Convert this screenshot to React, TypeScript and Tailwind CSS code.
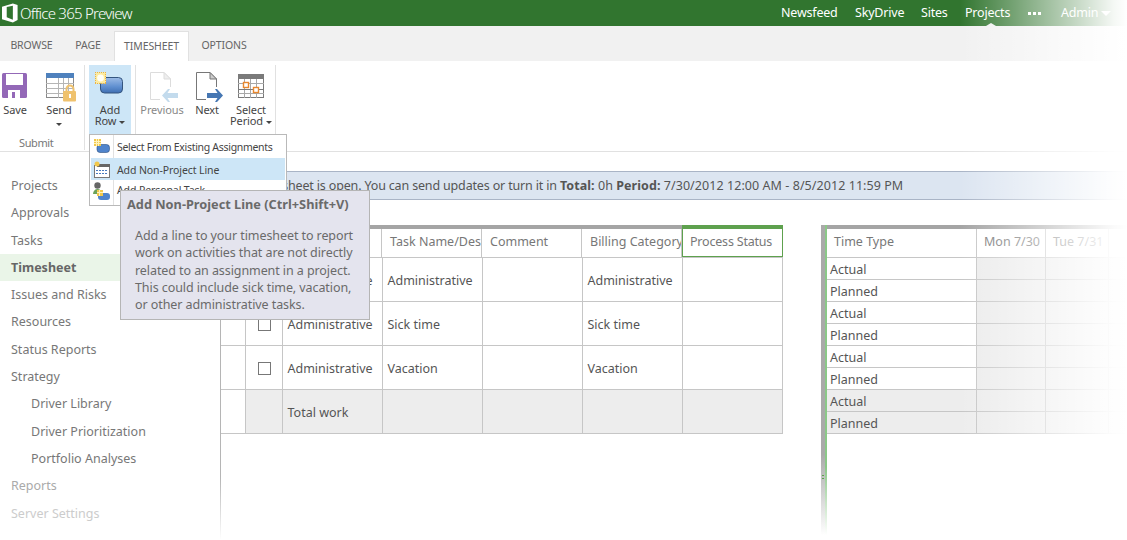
const navItems = [
  { label: "Projects", cls: "pl-[11px] text-[#777]" },
  { label: "Approvals", cls: "pl-[11px] text-[#777]" },
  { label: "Tasks", cls: "pl-[11px] text-[#777]" },
  { label: "Timesheet", cls: "pl-[11px] text-[#666] font-bold bg-[#eaf5e8]" },
  { label: "Issues and Risks", cls: "pl-[11px] text-[#777]" },
  { label: "Resources", cls: "pl-[11px] text-[#777]" },
  { label: "Status Reports", cls: "pl-[11px] text-[#777]" },
  { label: "Strategy", cls: "pl-[11px] text-[#777]" },
  { label: "Driver Library", cls: "pl-[31px] text-[#777]" },
  { label: "Driver Prioritization", cls: "pl-[31px] text-[#777]" },
  { label: "Portfolio Analyses", cls: "pl-[31px] text-[#777]" },
  { label: "Reports", cls: "pl-[11px] text-[#aaa]" },
  { label: "Server Settings", cls: "pl-[11px] text-[#ccc]" },
];

const rows = [
  { kind: "Administrative", task: "Administrative", billing: "Administrative" },
  { kind: "Administrative", task: "Sick time", billing: "Sick time" },
  { kind: "Administrative", task: "Vacation", billing: "Vacation" },
];

const timeRows = ["Actual", "Planned", "Actual", "Planned", "Actual", "Planned", "Actual", "Planned"];

function OfficeLogo() {
  return (
    <svg width="17" height="20" viewBox="0 0 18 20" className="ml-[2px] shrink-0">
      <path fillRule="evenodd" fill="#fff" d="M0 3.5 11.5 0 16.5 1.5V17.5L11.5 20 0 16.5ZM11.5 2.2 5 3.6V14.6L11.5 17.2Z" />
    </svg>
  );
}

function SaveIcon() {
  return (
    <svg width="26" height="26" viewBox="0 0 26 26">
      <rect x="0" y="0" width="25" height="25" rx="1.5" fill="#9368b7" />
      <rect x="4" y="1" width="17" height="11" fill="#fff" />
      <rect x="6" y="17" width="12" height="8" fill="#fff" />
      <rect x="10" y="19" width="3" height="6" fill="#9368b7" />
    </svg>
  );
}

function SendIcon() {
  return (
    <svg width="31" height="29" viewBox="0 0 31 29">
      <rect x="0.5" y="0.5" width="27" height="24" fill="#fff" stroke="#8a8a8a" />
      <rect x="0" y="0" width="28" height="5" fill="#4f81bd" />
      <path stroke="#b5b5b5" fill="none" d="M12.5 5v20M17.5 5v20M22.5 5v20M0 10.5h28M0 15.5h28M0 20.5h28" />
      <path fill="none" stroke="#efc26e" strokeWidth="2" d="M20.5 19v-3a3.5 3.5 0 0 1 7 0v3" />
      <rect x="17" y="18" width="13" height="10.5" rx="1" fill="#efc26e" />
      <rect x="23" y="21" width="2" height="4" fill="#fff" />
    </svg>
  );
}

function AddRowIcon() {
  return (
    <svg width="28" height="22" viewBox="0 0 28 22">
      <defs>
        <linearGradient id="blueBar" x1="0" y1="0" x2="0" y2="1">
          <stop offset="0" stopColor="#9dbce6" />
          <stop offset="0.6" stopColor="#5f8fd0" />
          <stop offset="1" stopColor="#3f6fb2" />
        </linearGradient>
      </defs>
      <rect x="5.5" y="5.5" width="22" height="15.5" rx="4" fill="url(#blueBar)" stroke="#34557f" />
      <rect x="0.5" y="0.5" width="10.5" height="11" fill="#fdeb9e" />
      <path stroke="#eeb23f" strokeDasharray="1 1" fill="none" d="M0 .5h11M0 11.5h11M.5 0v12M10.5 0v12" />
      <circle cx="5.5" cy="6" r="3.4" fill="#fffef6" />
    </svg>
  );
}

function PageArrow({ light }: { light?: boolean }) {
  const line = light ? "#dcdcdc" : "#777";
  return (
    <svg width="28" height="30" viewBox="0 0 28 30">
      <path fill="#fff" stroke={line} d="M0.5 0.5H14L20.5 7V27.5H0.5Z" />
      <path fill={light ? "#eee" : "#ccc"} stroke={line} d="M14 0.5V7H20.5Z" />
      <rect x="10" y="15" width="18" height="15" fill="#fff" />
      {light ? (
        <path fill="#c3dbed" d="M18 17H20L17.5 21H28V26H17.5L20 30H18L12 23.5Z" />
      ) : (
        <path fill="#4677b3" d="M19 17H21L27 23.5 21 30H19L21.5 26H11V21H21.5Z" />
      )}
    </svg>
  );
}

function PeriodIcon() {
  return (
    <svg width="27" height="25" viewBox="0 0 27 25">
      <rect x="0.5" y="0.5" width="25" height="23" fill="#fff" stroke="#7a7a7a" />
      <rect x="0" y="0" width="26" height="5" fill="#7a7a7a" />
      <path stroke="#a8a8a8" fill="none" d="M6.5 5v19M12.5 5v19M18.5 5v19M0 9.5h26M0 19.5h26" />
      <path stroke="#7a7a7a" d="M0 15.5h26" />
      <rect x="5.5" y="8.5" width="5" height="5" fill="#fff" stroke="#e8872d" strokeWidth="1.4" />
      <rect x="15.5" y="13.5" width="5" height="5" fill="#fff" stroke="#e8872d" strokeWidth="1.4" />
    </svg>
  );
}

function MenuBarIcon() {
  return (
    <svg width="16" height="14" viewBox="0 0 16 14">
      <rect x="3" y="5.5" width="12.5" height="8" rx="3" fill="#4f84cc" stroke="#2a4f80" strokeWidth="0.6" />
      <rect x="0" y="0" width="7" height="7" fill="#f2c84b" />
      <path stroke="#fff3bd" d="M0 2.5h7M0 4.5h7M2.5 0v7M4.5 0v7" />
    </svg>
  );
}

function MenuCalendarIcon() {
  return (
    <svg width="17" height="17" viewBox="0 0 17 17">
      <rect x="1.5" y="4.5" width="15" height="12" fill="#fff" stroke="#777" />
      <rect x="4" y="3" width="13" height="3" fill="#666" />
      <path stroke="#4a7cc0" strokeDasharray="2 1" fill="none" d="M3 9.5h12M3 12.5h12" />
      <circle cx="4" cy="3" r="2.5" fill="#f2c84b" />
    </svg>
  );
}

function MenuPersonIcon() {
  return (
    <svg width="17" height="18" viewBox="0 0 17 18">
      <circle cx="4.5" cy="3.5" r="3.2" fill="#666" />
      <path fill="#6ca35a" d="M0 12c0-3 2-5 4.5-5S9 9 9 12Z" />
      <rect x="5" y="11" width="12" height="7" rx="3" fill="#4f84cc" />
      <rect x="4" y="8" width="6" height="6" fill="#f2c84b" />
      <path stroke="#fff3bd" d="M4 10.5h6M6.5 8v6" />
    </svg>
  );
}

function Caret({ color = "#444" }: { color?: string }) {
  return (
    <svg width="6" height="3" viewBox="0 0 6 3" className="inline-block align-middle">
      <path d="M0 0h6L3 3Z" fill={color} />
    </svg>
  );
}

function RibbonButton({
  icon,
  lines,
  width,
  caret,
  dim,
  active,
  iconCls,
}: {
  icon: React.ReactNode;
  lines: string[];
  width: string;
  caret?: "inline" | "below";
  dim?: boolean;
  active?: boolean;
  iconCls: string;
}) {
  return (
    <div className={`flex flex-col items-center ${width} ${active ? "bg-[#cde6f7] h-[74px]" : ""}`}>
      <div className={`flex items-end justify-center ${iconCls}`}>{icon}</div>
      <div className={`text-[11px] leading-[11px] text-center tracking-[-0.1px] ${dim ? "text-[#888]" : "text-[#444]"}`}>
        {lines.map((l, i) => (
          <div key={l}>
            {l}
            {caret === "inline" && i === lines.length - 1 ? (
              <span className="ml-[3px]">
                <Caret />
              </span>
            ) : null}
          </div>
        ))}
        {caret === "below" ? (
          <div className="mt-[2px]">
            <Caret />
          </div>
        ) : null}
      </div>
    </div>
  );
}

export default function App() {
  return (
    <div className="relative w-[1127px] h-[540px] overflow-hidden bg-white font-['Noto_Sans',sans-serif]">
      {/* top bar */}
      <div className="relative h-[26px] bg-[#31752f] flex items-center text-white">
        <OfficeLogo />
        <span className="ml-[1px] text-[15px] font-light tracking-[-0.75px]">Office 365 Preview</span>
        <div className="ml-auto flex items-center text-[12.5px] tracking-[-0.2px] mr-[16px]">
          <span className="w-[74px]">Newsfeed</span>
          <span className="w-[66px]">SkyDrive</span>
          <span className="w-[44px]">Sites</span>
          <span className="w-[63px]">Projects</span>
          <span className="w-[33px] flex gap-[2px]">
            <i className="block w-[3px] h-[3px] bg-white" />
            <i className="block w-[3px] h-[3px] bg-white" />
            <i className="block w-[3px] h-[3px] bg-white" />
          </span>
          <span className="w-[40px]">Admin</span>
          <svg width="10" height="5" viewBox="0 0 10 5">
            <path d="M0 0h10L5 5Z" fill="#fff" />
          </svg>
        </div>
        <svg width="10" height="3" viewBox="0 0 10 3" className="absolute left-[986px] bottom-0">
          <path d="M0 3 5 0l5 3Z" fill="#f1f1f1" />
        </svg>
      </div>

      {/* tabs */}
      <div className="h-[35px] bg-[#f1f1f1] flex items-end text-[10.5px] text-[#666] tracking-[-0.1px]">
        <div className="h-[30px] w-[62px] flex items-center justify-center pl-[1px]">BROWSE</div>
        <div className="h-[30px] w-[52px] flex items-center justify-center">PAGE</div>
        <div className="h-[30px] w-[75px] bg-white border border-b-0 border-[#e1e1e1] flex items-center justify-center">
          TIMESHEET
        </div>
        <div className="h-[30px] w-[70px] flex items-center justify-center">OPTIONS</div>
      </div>

      {/* ribbon */}
      <div className="h-[91px] border-b border-[#e1e1e1] flex pt-[4px]">
        <div className="w-[85px] h-[85px] border-r border-[#e1e1e1] flex flex-col">
          <div className="flex h-[66px]">
            <RibbonButton icon={<SaveIcon />} lines={["Save"]} width="w-[30px]" iconCls="h-[34px] mb-[5px]" />
            <RibbonButton
              icon={<SendIcon />}
              lines={["Send"]}
              width="w-[44px] ml-[7px]"
              caret="below"
              iconCls="h-[37px] mb-[2px] pl-[4px]"
            />
          </div>
          <div className="mt-[7px] pl-[19px] text-[11px] leading-[14px] text-[#777] tracking-[-0.4px]">Submit</div>
        </div>
        <div className="w-[51px] h-[85px] pl-[4px] border-r border-[#e1e1e1]">
          <RibbonButton
            icon={<AddRowIcon />}
            lines={["Add", "Row"]}
            width="w-[42px]"
            caret="inline"
            active
            iconCls="h-[29px] mb-[10px] pr-[2px]"
          />
        </div>
        <div className="w-[140px] h-[85px] border-r border-[#e1e1e1] flex pl-[4px]">
          <RibbonButton icon={<PageArrow light />} lines={["Previous"]} width="w-[44px]" dim iconCls="h-[37px] mb-[2px] pl-[4px]" />
          <RibbonButton icon={<PageArrow />} lines={["Next"]} width="w-[44px] ml-[1px]" iconCls="h-[37px] mb-[2px] pl-[6px]" />
          <RibbonButton
            icon={<PeriodIcon />}
            lines={["Select", "Period"]}
            width="w-[44px]"
            caret="inline"
            iconCls="h-[34px] mb-[5px]"
          />
        </div>
      </div>

      {/* body */}
      <div className="flex h-[388px]">
        <div className="relative w-[221px] pt-[20px] shrink-0 text-[12.5px]">
          {navItems.map((n) => (
            <div key={n.label} className={`h-[27.3px] leading-[27px] ${n.cls}`}>
              {n.label}
            </div>
          ))}
          <div className="absolute right-0 top-[73px] bottom-0 w-[1px] bg-gradient-to-b from-[#b5b5b5] via-[#b5b5b5] via-[80%] to-white" />
        </div>

        <div className="flex-1 min-w-0 pt-[19px]">
          <div className="h-[29px] bg-[#dce5f1] border-y border-[#a9b4c6] pl-[11px] flex items-center text-[12.5px] text-[#555] whitespace-nowrap">
            <span className="pt-[2px]">
              <span className="tracking-[-0.16px]">The timesheet is open. You can send updates or turn it in </span>
              <span className="tracking-[0.06px]">
                <b>Total:</b> 0h <b>Period:</b> 7/30/2012 12:00 AM - 8/5/2012 11:59 PM
              </span>
            </span>
          </div>

          <div className="mt-[25px] flex">
            {/* left grid */}
            <div className="w-[562px] shrink-0 text-[12.5px] text-[#555]">
              <div className="flex h-[32px] text-[#777] whitespace-nowrap">
                <div className="w-[461px] border-t-[4px] border-[#a5a5a5] flex">
                  <div className="w-[24px] border-r border-[#c6c6c6]" />
                  <div className="w-[37px] border-r border-[#c6c6c6]" />
                  <div className="w-[100px] border-r border-[#c6c6c6]" />
                  <div className="w-[100px] border-r border-[#c6c6c6] flex items-center pl-[8px] pb-[1px] overflow-hidden">Task Name/Des</div>
                  <div className="w-[100px] border-r border-[#c6c6c6] flex items-center pl-[8px] pb-[1px]">Comment</div>
                  <div className="w-[100px] border-r border-[#c6c6c6] flex items-center pl-[8px] pb-[1px] overflow-hidden">Billing Category</div>
                </div>
                <div className="w-[101px] border border-t-[4px] border-[#5ea14e] flex items-center pl-[7px] pb-[1px] tracking-[-0.2px]">Process Status</div>
              </div>
              <table className="table-fixed border-collapse w-[561px]">
                <colgroup>
                  <col className="w-[24px]" />
                  <col className="w-[37px]" />
                  <col className="w-[100px]" />
                  <col className="w-[100px]" />
                  <col className="w-[100px]" />
                  <col className="w-[100px]" />
                  <col className="w-[100px]" />
                </colgroup>
                <tbody>
                  {rows.map((r, i) => (
                    <tr key={r.task} className="h-[44px]">
                      <td className="border border-[#c6c6c6] border-l-0" />
                      <td className={`border border-[#c6c6c6] pt-[2px] pl-[1px] ${i === 2 ? "border-l-[#5ea14e]" : ""}`}>
                        <div className="w-[13px] h-[13px] border border-[#777] mx-auto" />
                      </td>
                      <td className="border border-[#c6c6c6] pl-[5px] pt-[4px]">{r.kind}</td>
                      <td className="border border-[#c6c6c6] pl-[5px] pt-[4px]">{r.task}</td>
                      <td className="border border-[#c6c6c6]" />
                      <td className="border border-[#c6c6c6] pl-[5px] pt-[4px]">{r.billing}</td>
                      <td className="border border-[#c6c6c6]" />
                    </tr>
                  ))}
                  <tr className="h-[44px]">
                    <td className="border border-[#c6c6c6] border-l-0" />
                    <td className="border border-[#c6c6c6] bg-[#ededed]" />
                    <td className="border border-[#c6c6c6] bg-[#ededed] pl-[5px] pt-[4px]">Total work</td>
                    <td className="border border-[#c6c6c6] bg-[#ededed]" />
                    <td className="border border-[#c6c6c6] bg-[#ededed]" />
                    <td className="border border-[#c6c6c6] bg-[#ededed]" />
                    <td className="border border-[#c6c6c6] bg-[#ededed]" />
                  </tr>
                </tbody>
              </table>
            </div>

            {/* splitter */}
            <div className="relative ml-[38px] w-[6px] shrink-0 h-[310px] flex">
              <div className="w-[4px] h-full bg-gradient-to-b from-[#aaa] via-[#aaa] via-[74%] to-white" />
              <div className="w-[2px] h-full bg-gradient-to-b from-[#8bc888] via-[#8bc888] via-[78%] to-white" />
              <div className="absolute left-[1px] top-[250px] w-[2px] h-[4px] border-y border-[#5ea14e]" />
            </div>

            {/* right grid */}
            <div className="flex-1 min-w-0 text-[12.5px] text-[#555]">
              <div className="flex h-[33px] border-t-[4px] border-[#a5a5a5] border-b border-b-[#c6c6c6] text-[#777] whitespace-nowrap">
                <div className="w-[150px] border-r border-[#c6c6c6] pl-[7px] pb-[2px] flex items-center">Time Type</div>
                <div className="w-[69px] border-r border-[#c6c6c6] pl-[7px] pb-[2px] flex items-center">Mon 7/30</div>
                <div className="w-[63px] border-r border-[#c6c6c6] pl-[7px] pb-[2px] flex items-center">Tue 7/31</div>
              </div>
              {timeRows.map((t, i) => (
                <div key={`${t}${i}`} className={`flex h-[22px] border-b border-[#c6c6c6] ${i > 5 ? "bg-[#ededed]" : ""}`}>
                  <div className="w-[150px] border-r border-[#c6c6c6] pl-[3px] leading-[23px]">{t}</div>
                  <div className="w-[69px] border-r border-[#c6c6c6] bg-[#ececec]" />
                  <div className="w-[63px] border-r border-[#c6c6c6] bg-[#ececec]" />
                  <div className="flex-1 bg-[#ececec]" />
                </div>
              ))}
            </div>
          </div>
        </div>
      </div>

      {/* fade over the right edge */}
      <div className="absolute inset-y-0 left-[960px] right-0 pointer-events-none bg-gradient-to-r from-white/0 via-white/95 via-[92%] to-white" />

      {/* dropdown menu */}
      <div className="absolute left-[89px] top-[134px] w-[198px] h-[72px] bg-white border border-[#b9b9b9] p-[1px] text-[10.5px] text-[#444] whitespace-nowrap">
        <div className="absolute left-[23px] top-0 bottom-0 w-[1px] bg-[#e1e1e1]" />
        <div className="relative h-[22px] flex items-center">
          <span className="w-[26px] pl-[3px] pb-[3px]"><MenuBarIcon /></span>
          <span className="tracking-[-0.3px] pt-[2px]">Select From Existing Assignments</span>
        </div>
        <div className="relative h-[22px] flex items-center bg-[#cde6f7]">
          <span className="w-[26px] pl-[2px]"><MenuCalendarIcon /></span>
          <span className="tracking-[-0.1px] pt-[4px]">Add Non-Project Line</span>
        </div>
        <div className="relative h-[22px] flex items-center">
          <span className="w-[26px] pl-[2px]"><MenuPersonIcon /></span>
          <span className="tracking-[-0.1px]">Add Personal Task</span>
        </div>
      </div>

      {/* tooltip */}
      <div className="absolute left-[120px] top-[190px] w-[250px] h-[130px] bg-[#e4e4ee] border border-[#b5b5b5] text-[#6a6a6a]">
        <div className="pl-[6px] pt-[4px] text-[12.75px] leading-[18px] font-bold whitespace-nowrap">
          Add Non-Project Line (Ctrl+Shift+V)
        </div>
        <div className="pl-[14px] pt-[14px] text-[12.5px] leading-[17.3px] whitespace-nowrap tracking-[-0.08px]">
          <div>Add a line to your timesheet to report</div>
          <div>work on activities that are not directly</div>
          <div>related to an assignment in a project.</div>
          <div>This could include sick time, vacation,</div>
          <div>or other administrative tasks.</div>
        </div>
      </div>
    </div>
  );
}
